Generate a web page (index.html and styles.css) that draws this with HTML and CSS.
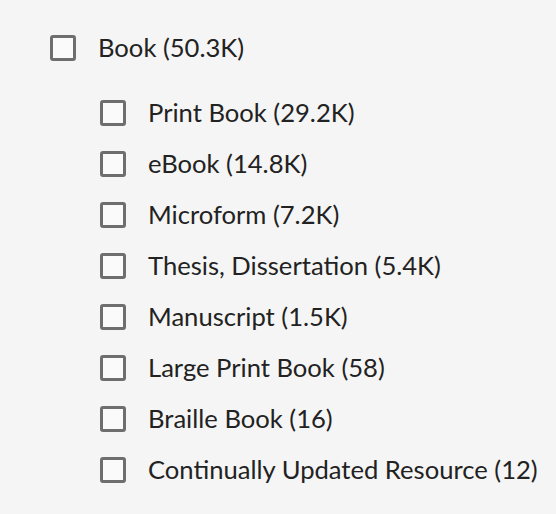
FILE: index.html
```html
<!DOCTYPE html>
<html lang="en">
<head>
    <meta charset="UTF-8">
    <title>Format filter</title>
    <link rel="stylesheet" href="styles.css">
</head>
<body>
    <div class="facet">
        <label class="facet-row">
            <span class="box"></span>
            <span class="facet-label">Book (50.3K)</span>
        </label>
        <div class="sub-list">
            <label class="facet-row"><span class="box"></span><span class="facet-label">Print Book (29.2K)</span></label>
            <label class="facet-row"><span class="box"></span><span class="facet-label">eBook (14.8K)</span></label>
            <label class="facet-row"><span class="box"></span><span class="facet-label">Microform (7.2K)</span></label>
            <label class="facet-row"><span class="box"></span><span class="facet-label">Thesis, Dissertation (5.4K)</span></label>
            <label class="facet-row"><span class="box"></span><span class="facet-label">Manuscript (1.5K)</span></label>
            <label class="facet-row"><span class="box"></span><span class="facet-label">Large Print Book (58)</span></label>
            <label class="facet-row"><span class="box"></span><span class="facet-label">Braille Book (16)</span></label>
            <label class="facet-row"><span class="box"></span><span class="facet-label">Continually Updated Resource (12)</span></label>
        </div>
    </div>
</body>
</html>
```

FILE: styles.css
```css
* {
    margin: 0;
    padding: 0;
    box-sizing: border-box;
}

body {
    font-family: Lato, 'Liberation Sans', sans-serif;
    background-color: #f5f5f5;
    color: #222;
}

.facet {
    padding: 22px 0 0 50px;
}

.facet-row {
    display: flex;
    align-items: center;
    height: 51px;
    cursor: pointer;
}

.box {
    width: 26px;
    height: 26px;
    border: 3px solid #6e6e6e;
    border-radius: 3px;
    background: #fafafa;
    margin-right: 22px;
    flex-shrink: 0;
}

.facet-label {
    font-size: 25.6px;
    line-height: 1;
}

.sub-list {
    padding-left: 50px;
    margin-top: 14px;
}
```
